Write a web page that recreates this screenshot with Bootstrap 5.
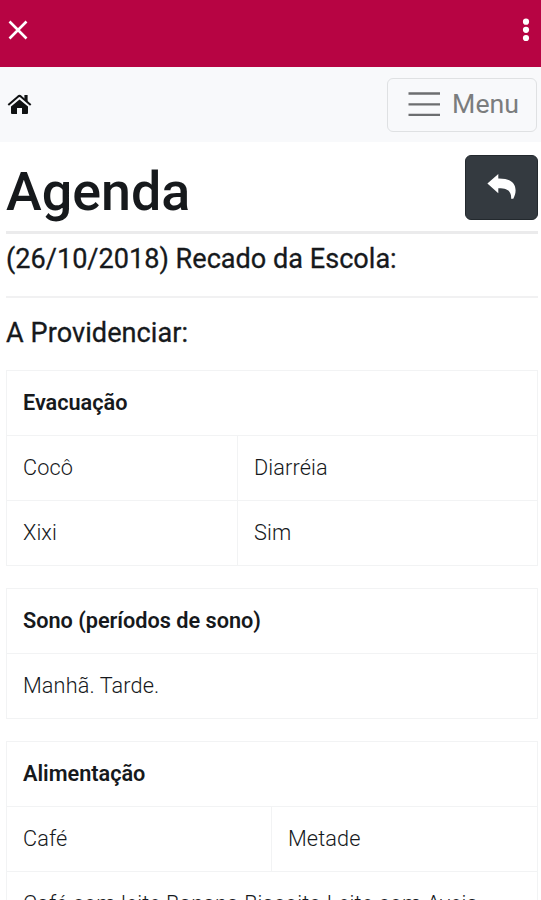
<!DOCTYPE html>
<html lang="pt-BR">
<head>
<meta charset="utf-8">
<meta name="viewport" content="width=device-width, initial-scale=1">
<title>Agenda</title>
<link href="https://cdn.jsdelivr.net/npm/bootstrap@5.3.0/dist/css/bootstrap.min.css" rel="stylesheet">
<style>
body { font-family: Roboto, "Liberation Sans", sans-serif; font-size: 21.7px; color: #16191c; height: 900px; overflow: hidden; }
svg { display: block; }
.app-bar { background: #b70443; height: 67px; padding: 0 9px 7px 8px; }
.site-nav { background: #f8f9fb; height: 75px; padding: 0 4px 0 7px; }
.menu-btn { width: 150px; height: 54px; border: 1.5px solid #dfe1e3; border-radius: 6px; font-size: 26.7px; line-height: 1; color: #7b7d7e; padding: 0 17px 1px 20px; }
.page-body { padding: 0 3px 0 6px; }
.title-row { height: 89px; padding-top: 13px; }
.title-row h1 { font-size: 53.8px; line-height: 74px; }
.back-btn { width: 73px; height: 65px; background: #343a40; border: 1px solid #23292e; border-radius: 6px; }
.rule-strong { height: 3px; background: #ebebec; }
.rule-soft { height: 2px; background: #f1f1f2; }
.section-head { font-size: 27.1px; line-height: 32px; font-weight: 400; -webkit-text-stroke: .3px #16191c; }
.head-note { padding: 9px 0 21px; }
.head-todo { padding: 19px 0 21px; letter-spacing: .06px; }
.diary { table-layout: fixed; margin-bottom: 22px; font-weight: 300; letter-spacing: .11px; border-color: #f2f3f4; --bs-table-color: #16191c; }
.diary th, .diary td { height: 65px; padding: 0 16px; vertical-align: middle; line-height: 32px; border: 1.5px solid #f2f3f4; }
.diary th { font-weight: 600; letter-spacing: -.02px; }
.split-a { width: 231px; }
.split-b { width: 265px; }
</style>
<script src="https://cdn.jsdelivr.net/npm/bootstrap@5.3.0/dist/js/bootstrap.bundle.min.js" defer></script>
</head>
<body class="bg-white">
<header class="app-bar d-flex align-items-center justify-content-between">
  <svg width="20" height="20" viewBox="0 0 20 20" stroke="#fff" stroke-width="2.6" fill="none" aria-label="Fechar"><path d="M1.5 1.5 18.5 18.5M18.5 1.5 1.5 18.5"/></svg>
  <svg width="12" height="24" viewBox="0 0 12 24" fill="#fff" aria-label="Mais"><circle cx="6" cy="3.7" r="3.1"/><circle cx="6" cy="11.8" r="3.1"/><circle cx="6" cy="20" r="3.1"/></svg>
</header>
<nav class="site-nav d-flex align-items-center justify-content-between">
  <a href="#" aria-label="Início">
    <svg width="25" height="21" viewBox="0 0 25 21"><path d="M12.5 5.6 4 12.6V19q0 1 1 1h5v-6h5v6h5q1 0 1-1v-6.4Z" fill="#101213"/><path d="M1.3 11 11.2 2.4q1.3-1 2.6 0L23.7 11" fill="none" stroke="#101213" stroke-width="2"/><path d="M17.4 1h3.2v7l-3.2-2.8Z" fill="#101213"/></svg>
  </a>
  <button class="menu-btn btn d-flex align-items-center justify-content-between" type="button">
    <svg width="33" height="26" viewBox="0 0 33 26" stroke="#6c6e70" stroke-width="2.3"><path d="M.5 2.5H32M.5 13.3H32M.5 23.9H32"/></svg>
    <span>Menu</span>
  </button>
</nav>
<main class="page-body">
  <div class="title-row d-flex justify-content-between">
    <h1 class="mb-0">Agenda</h1>
    <button class="back-btn btn d-flex align-items-center justify-content-center p-0" type="button" aria-label="Voltar">
      <svg width="30" height="28" viewBox="0 0 30 28" fill="#fff"><path d="M.4 9.4 11.3 0V4.4C22.4 4.2 28.6 8.2 28.6 16.6c0 3-1 5.5-2.3 8.2h-2.2C24.6 17.6 21.1 14.2 11.3 14.3v4.9Z"/></svg>
    </button>
  </div>
  <div class="rule-strong"></div>
  <h2 class="section-head head-note mb-0">(26/10/2018) Recado da Escola:</h2>
  <div class="rule-soft"></div>
  <h2 class="section-head head-todo mb-0">A Providenciar:</h2>
  <table class="table table-bordered diary">
    <colgroup><col class="split-a"><col></colgroup>
    <tbody>
      <tr><th colspan="2">Evacuação</th></tr>
      <tr><td>Cocô</td><td>Diarréia</td></tr>
      <tr><td>Xixi</td><td>Sim</td></tr>
    </tbody>
  </table>
  <table class="table table-bordered diary">
    <tbody>
      <tr><th>Sono (períodos de sono)</th></tr>
      <tr><td>Manhã. Tarde.</td></tr>
    </tbody>
  </table>
  <table class="table table-bordered diary">
    <colgroup><col class="split-b"><col></colgroup>
    <tbody>
      <tr><th colspan="2">Alimentação</th></tr>
      <tr><td>Café</td><td>Metade</td></tr>
      <tr><td colspan="2">Café com leite Banana Biscoito Leite com Aveia</td></tr>
    </tbody>
  </table>
</main>
</body>
</html>
